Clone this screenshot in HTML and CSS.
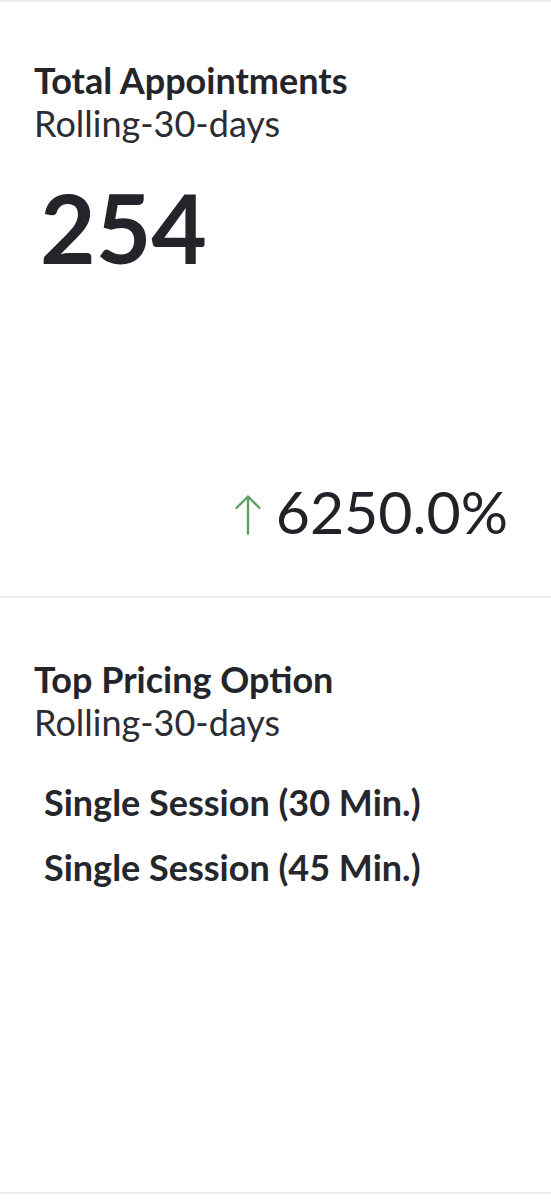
FILE: index.html
```html
<!DOCTYPE html>
<html lang="en">
<head>
<meta charset="utf-8">
<title>Dashboard</title>
<link rel="stylesheet" href="styles.css">
</head>
<body>
<main class="page">
  <section class="card card-first">
    <h2 class="card-title">Total Appointments</h2>
    <p class="card-sub">Rolling-30-days</p>
    <div class="metric">254</div>
    <div class="change">
      <svg class="change-icon" width="30" height="42" viewBox="0 0 30 42" aria-hidden="true">
        <path d="M15 40.5V3.5M3.5 15L15 3.5L26.5 15" fill="none" stroke="#5c9f63" stroke-width="2.4" stroke-linecap="round" stroke-linejoin="round"/>
      </svg>
      <span class="change-value">6250.0%</span>
    </div>
  </section>
  <section class="card card-second">
    <h2 class="card-title">Top Pricing Option</h2>
    <p class="card-sub">Rolling-30-days</p>
    <ul class="options">
      <li class="option">Single Session (30 Min.)</li>
      <li class="option">Single Session (45 Min.)</li>
    </ul>
  </section>
</main>
</body>
</html>
```

FILE: styles.css
```css
html, body {
  margin: 0;
  padding: 0;
  background: #ffffff;
}

body {
  font-family: Lato, "Open Sans", "Liberation Sans", sans-serif;
  color: #25252c;
}

.page {
  display: flex;
  flex-direction: column;
  border-bottom: 2px solid #ececec;
}

.card {
  box-sizing: border-box;
  height: 596px;
  border-top: 2px solid #ececec;
  padding: 0 43px 0 34px;
  display: flex;
  flex-direction: column;
}

.card-first {
  padding-top: 57px;
  padding-bottom: 49px;
}

.card-second {
  padding-top: 60px;
}

.card-title {
  margin: 0;
  font-size: 36px;
  line-height: 43px;
  font-weight: 700;
  color: #24242b;
}

.card-sub {
  margin: 0;
  font-size: 36px;
  line-height: 43px;
  font-weight: 400;
  color: #2c2c33;
}

.metric {
  margin-top: 24px;
  padding-left: 6px;
  font-size: 96px;
  line-height: 116px;
  font-weight: 700;
  color: #24242b;
}

.change {
  margin-top: auto;
  display: flex;
  justify-content: flex-end;
  align-items: center;
  gap: 13px;
}

.change-icon {
  display: block;
  margin-top: 4px;
}

.change-value {
  font-size: 59px;
  line-height: 71px;
  font-weight: 400;
  color: #222228;
}

.options {
  list-style: none;
  margin: 37px 0 0;
  padding: 0 0 0 10px;
  display: flex;
  flex-direction: column;
  gap: 22px;
}

.option {
  font-size: 36px;
  line-height: 43px;
  font-weight: 700;
  color: #26262d;
}
```
